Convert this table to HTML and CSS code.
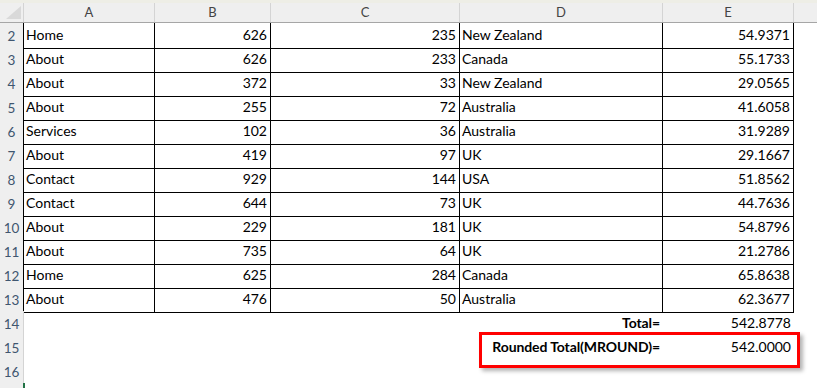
FILE: index.html
```html
<!DOCTYPE html>
<html>
<head>
<meta charset="utf-8">
<link rel="stylesheet" href="styles.css">
</head>
<body>
<div class="strip"></div>
<div class="sheet">
  <div class="row head">
    <div class="corner"><span class="tri"></span></div>
    <div class="ch">A</div>
    <div class="ch">B</div>
    <div class="ch">C</div>
    <div class="ch">D</div>
    <div class="ch">E</div>
    <div class="ch end"></div>
  </div>

  <div class="row data"><div class="rh">2</div><div class="c">Home</div><div class="c n">626</div><div class="c n">235</div><div class="c">New Zealand</div><div class="c n">54.9371</div><div class="x"></div></div>
  <div class="row data"><div class="rh">3</div><div class="c">About</div><div class="c n">626</div><div class="c n">233</div><div class="c">Canada</div><div class="c n">55.1733</div><div class="x"></div></div>
  <div class="row data"><div class="rh">4</div><div class="c">About</div><div class="c n">372</div><div class="c n">33</div><div class="c">New Zealand</div><div class="c n">29.0565</div><div class="x"></div></div>
  <div class="row data"><div class="rh">5</div><div class="c">About</div><div class="c n">255</div><div class="c n">72</div><div class="c">Australia</div><div class="c n">41.6058</div><div class="x"></div></div>
  <div class="row data"><div class="rh">6</div><div class="c">Services</div><div class="c n">102</div><div class="c n">36</div><div class="c">Australia</div><div class="c n">31.9289</div><div class="x"></div></div>
  <div class="row data"><div class="rh">7</div><div class="c">About</div><div class="c n">419</div><div class="c n">97</div><div class="c">UK</div><div class="c n">29.1667</div><div class="x"></div></div>
  <div class="row data"><div class="rh">8</div><div class="c">Contact</div><div class="c n">929</div><div class="c n">144</div><div class="c">USA</div><div class="c n">51.8562</div><div class="x"></div></div>
  <div class="row data"><div class="rh">9</div><div class="c">Contact</div><div class="c n">644</div><div class="c n">73</div><div class="c">UK</div><div class="c n">44.7636</div><div class="x"></div></div>
  <div class="row data"><div class="rh">10</div><div class="c">About</div><div class="c n">229</div><div class="c n">181</div><div class="c">UK</div><div class="c n">54.8796</div><div class="x"></div></div>
  <div class="row data"><div class="rh">11</div><div class="c">About</div><div class="c n">735</div><div class="c n">64</div><div class="c">UK</div><div class="c n">21.2786</div><div class="x"></div></div>
  <div class="row data"><div class="rh">12</div><div class="c">Home</div><div class="c n">625</div><div class="c n">284</div><div class="c">Canada</div><div class="c n">65.8638</div><div class="x"></div></div>
  <div class="row data"><div class="rh">13</div><div class="c">About</div><div class="c n">476</div><div class="c n">50</div><div class="c">Australia</div><div class="c n">62.3677</div><div class="x"></div></div>

  <div class="row blank"><div class="rh">14</div><div class="c"></div><div class="c"></div><div class="c"></div><div class="c n bold">Total=</div><div class="c n">542.8778</div><div class="x"></div></div>
  <div class="row blank"><div class="rh">15</div><div class="c"></div><div class="c"></div><div class="c"></div><div class="c n bold">Rounded Total(MROUND)=</div><div class="c n">542.0000</div><div class="x"></div></div>
  <div class="row blank"><div class="rh">16</div><div class="c"></div><div class="c"></div><div class="c"></div><div class="c"></div><div class="c"></div><div class="x"></div></div>
  <div class="row stub"><div class="rh"></div></div>

  <div class="highlight"></div>
</div>
</body>
</html>
```

FILE: styles.css
```css
html, body {
  margin: 0;
  padding: 0;
  background: #ffffff;
  overflow: hidden;
}

body {
  font-family: "Lato", "Liberation Sans", sans-serif;
  font-size: 14px;
  color: #000;
}

.strip {
  height: 3px;
  background: #eeeee6;
}

.sheet {
  position: relative;
}

.row {
  display: grid;
  grid-template-columns: 24px 131px 116px 189px 203px 131px 1fr;
  height: 24px;
}

.row > div {
  box-sizing: border-box;
  white-space: nowrap;
}

/* column header row */
.head {
  height: 20px;
  background: #efefef;
  border-bottom: 1px solid #a6a6a6;
  box-sizing: border-box;
}

.corner {
  display: flex;
  align-items: flex-end;
  justify-content: flex-end;
  padding: 0 2px 3px 0;
  border-right: 1px solid #d4d4d4;
}

.tri {
  display: block;
  width: 15px;
  height: 13px;
  background: #d9d9d9;
  clip-path: polygon(100% 0, 100% 100%, 0 100%);
}

.ch {
  border-right: 1px solid #d4d4d4;
  text-align: center;
  font-size: 13px;
  line-height: 19px;
  color: #444;
}

.ch.end {
  border-right: none;
}

/* row headers */
.rh {
  background: #efefef;
  border-bottom: 1px solid #d8d8d8;
  border-right: 1px solid #d4d4d4;
  text-align: center;
  font-size: 13.5px;
  line-height: 24px;
  padding-top: 1px;
  color: #3f5670;
}

.data .rh {
  border-right-color: #000;
}

/* cells */
.c {
  padding: 0 3px 0 2px;
  line-height: 23px;
  overflow: visible;
}

.data .c {
  border-right: 1px solid #000;
  border-bottom: 1px solid #000;
}

.n {
  text-align: right;
}

.bold {
  font-weight: 700;
  letter-spacing: -0.1px;
}

.stub {
  height: 6px;
}

.stub .rh {
  border-bottom: none;
  border-right: 2px solid #217346;
  width: 25px;
}

.highlight {
  position: absolute;
  left: 479px;
  top: 329px;
  width: 321px;
  height: 36px;
  box-sizing: border-box;
  border: 3px solid #ff0000;
  box-shadow: 3px 3px 4px rgba(0, 0, 0, 0.3);
}
```
